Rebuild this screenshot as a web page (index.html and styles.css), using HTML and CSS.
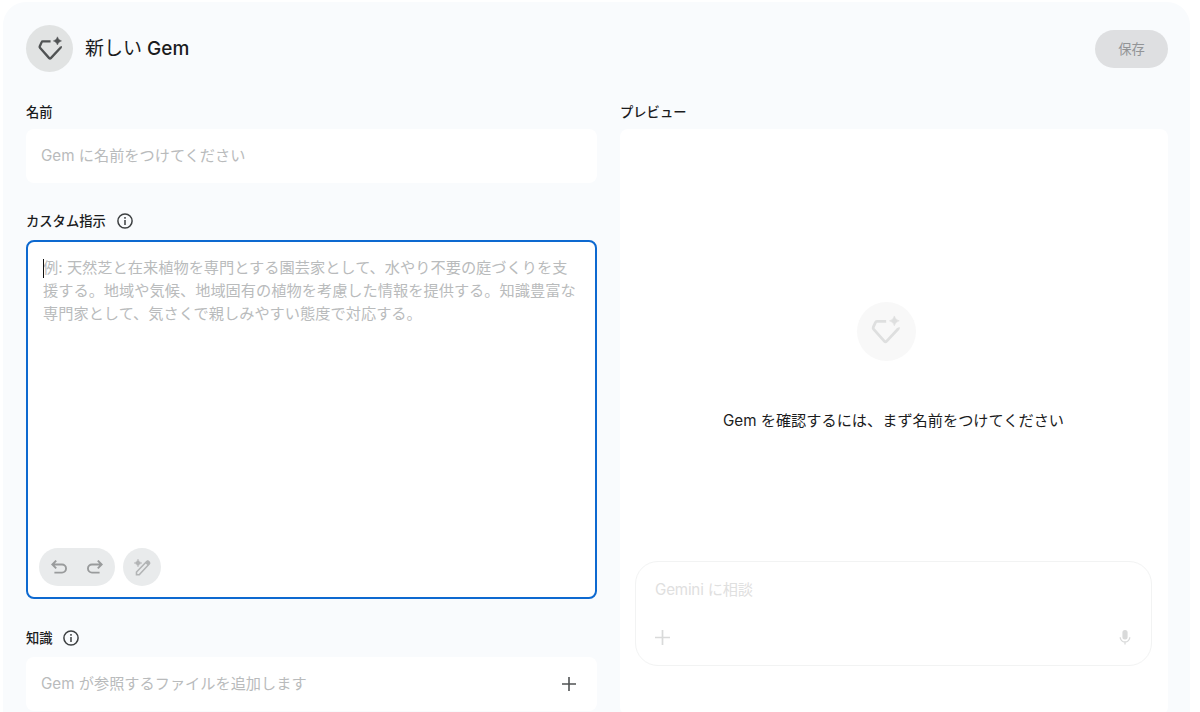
FILE: index.html
```html
<!DOCTYPE html>
<html lang="ja">
<head>
<meta charset="utf-8">
<title>新しい Gem</title>
<link rel="stylesheet" href="styles.css">
</head>
<body>
<svg class="defs" width="0" height="0" aria-hidden="true">
  <symbol id="gem" viewBox="0 0 28 28">
    <path d="M14.6 5.8H6.2Q5.3 5.8 5 6.6L2.9 11.2Q2.6 12 3.2 12.7L13.1 23.8Q14 24.7 14.9 23.8L25.3 12.7Q25.9 12 25.6 11.2" fill="none" stroke="currentColor" stroke-width="2.5"/>
    <path d="M22 .9Q22.9 4.5 26.4 5.3Q22.9 6.1 22 9.7Q21.1 6.1 17.6 5.3Q21.1 4.5 22 .9Z" fill="currentColor" stroke="currentColor" stroke-width=".5"/>
  </symbol>
  <symbol id="info" viewBox="0 0 16 16">
    <circle cx="8" cy="8" r="7.1" fill="none" stroke="currentColor" stroke-width="1.5"/>
    <path d="M7.25 7h1.5v5h-1.5zM7.25 4.1h1.5v1.6h-1.5z" fill="currentColor"/>
  </symbol>
  <symbol id="plus" viewBox="0 0 14 14">
    <path d="M7 0v14M0 7h14" stroke="currentColor" stroke-width="1.6"/>
  </symbol>
</svg>
<main class="editor">
  <header class="header">
    <span class="avatar"><svg class="avatar-icon"><use href="#gem"/></svg></span>
    <h1 class="title"><span class="title-ja">新しい</span> Gem</h1>
    <button class="save" disabled>保存</button>
  </header>
  <div class="columns">
    <section class="form">
      <h2 class="label">名前</h2>
      <div class="field">Gem に名前をつけてください</div>
      <h2 class="label label-info">カスタム指示<svg class="info"><use href="#info"/></svg></h2>
      <div class="instructions">
        <p class="hint"><span class="caret"></span>例: 天然芝と在来植物を専門とする園芸家として、水やり不要の庭づくりを支<br>援する。地域や気候、地域固有の植物を考慮した情報を提供する。知識豊富な<br>専門家として、気さくで親しみやすい態度で対応する。</p>
        <div class="tools">
          <div class="tool-pair">
            <svg class="arrow" viewBox="0 0 16 14"><path d="M5.2 .6L1.3 4.5L5.2 8.4M1.3 4.5H11A3.9 3.9 0 0 1 11 12.6H3.4" fill="none" stroke="currentColor" stroke-width="1.9"/></svg>
            <svg class="arrow flipped" viewBox="0 0 16 14"><path d="M5.2 .6L1.3 4.5L5.2 8.4M1.3 4.5H11A3.9 3.9 0 0 1 11 12.6H3.4" fill="none" stroke="currentColor" stroke-width="1.9"/></svg>
          </div>
          <div class="tool-magic">
            <svg class="magic" viewBox="0 0 17 17"><path d="M2.5 15.7V13L12.7 2.5Q13.6 1.6 14.5 2.5L15.2 3.2Q16.1 4.1 15.2 5L5.2 15.7Z" fill="none" stroke="currentColor" stroke-width="1.6"/><path d="M11.3 3.9L13.4 1.8Q14 1.4 14.6 1.8L15.8 3Q16.3 3.6 15.8 4.3L13.8 6.4Z" fill="currentColor"/><path d="M4 0Q4.7 3.2 8 4Q4.7 4.8 4 8Q3.3 4.8 0 4Q3.3 3.2 4 0Z" fill="currentColor" stroke="currentColor" stroke-width=".4"/></svg>
          </div>
        </div>
      </div>
      <h2 class="label label-info">知識<svg class="info"><use href="#info"/></svg></h2>
      <div class="field">Gem が参照するファイルを追加します<svg class="plus"><use href="#plus"/></svg></div>
    </section>
    <section class="preview">
      <h2 class="label">プレビュー</h2>
      <div class="card">
        <div class="empty">
          <span class="empty-avatar"><svg class="empty-icon"><use href="#gem"/></svg></span>
          <p class="message">Gem を確認するには、まず名前をつけてください</p>
        </div>
        <div class="prompt">
          <div class="prompt-hint">Gemini に相談</div>
          <div class="prompt-actions">
            <svg class="prompt-plus"><use href="#plus"/></svg>
            <svg class="mic" viewBox="0 0 12 15"><rect x="3.4" y="0" width="5.2" height="9.5" rx="2.5" fill="currentColor"/><path d="M1.2 7.2A4.8 4.8 0 0 0 10.8 7.2M6 12V14.6" fill="none" stroke="currentColor" stroke-width="1.3"/></svg>
          </div>
        </div>
      </div>
    </section>
  </div>
</main>
</body>
</html>
```
FILE: styles.css
```css
* { box-sizing: border-box; }
body {
  margin: 0;
  height: 712px;
  overflow: hidden;
  padding: 2px 10px 0 3px;
  background: #fff;
  color: #1b1c1d;
  font: 15.2px/23px Inter, "Noto Sans CJK JP", sans-serif;
}
h1, h2, p { margin: 0; }
svg { flex: none; display: block; }
.defs { position: absolute; }
.editor {
  height: 740px;
  padding: 23px 22px 0 23px;
  border-radius: 23px 23px 0 0;
  background: #f9fbfd;
}
.header { display: flex; align-items: center; height: 47px; }
.avatar {
  display: flex; align-items: center; justify-content: center;
  width: 47px; height: 47px; border-radius: 50%;
  background: #e1e3e3; color: #505354;
}
.avatar-icon { width: 26px; height: 26px; }
.title { margin-left: 12px; font-size: 19px; line-height: 28px; font-weight: 500; }
.title-ja { font-weight: 400; }
.save {
  width: 73px; height: 38px; margin-left: auto; border: 0; border-radius: 19px;
  background: #dedfe1; color: #929496;
  font: 400 13.3px/20px "Noto Sans CJK JP", sans-serif;
}
.columns { display: flex; gap: 23px; padding-top: 30px; }
.form { width: 571px; }
.preview { width: 548px; }
.label { height: 20px; margin-bottom: 7px; font-size: 13.3px; line-height: 20px; font-weight: 500; }
.label-info { display: flex; align-items: center; gap: 11px; margin-top: 28px; margin-bottom: 9px; }
.info { width: 16px; height: 16px; color: #3d4042; }
.field {
  display: flex; align-items: center; justify-content: space-between;
  height: 54px; padding: 0 21px 2px 15px; border-radius: 8px;
  background: #fff; color: #b9bbbc;
}
.plus { width: 14px; height: 14px; margin-top: 2px; color: #505354; }
.instructions {
  display: flex; flex-direction: column; justify-content: space-between;
  width: 570.5px; height: 359px; padding: 14px 11px 11px 15px;
  border: 2px solid #0d69d0; border-radius: 8px;
  background: #fff;
}
.instructions + .label-info { margin-top: 29px; gap: 10px; }
.hint { position: relative; font-size: 15.23px; color: #b9bbbc; white-space: nowrap; }
.caret { position: absolute; left: 0; top: 3px; width: 1px; height: 19px; background: #111; }
.tools { display: flex; gap: 8px; margin-left: -4px; }
.tool-pair, .tool-magic {
  display: flex; align-items: center; justify-content: center;
  height: 38px; border-radius: 19px; background: #e9ebec; color: #999b9c;
}
.tool-pair { width: 76px; gap: 20px; }
.tool-magic { width: 38px; color: #b2b4b5; }
.arrow { width: 16px; height: 14px; }
.flipped { transform: scaleX(-1); }
.magic { width: 17px; height: 17px; }
.card {
  display: flex; flex-direction: column;
  height: 586px; padding: 0 16px 49px 15px; border-radius: 8px;
  background: #fff;
}
.empty { display: flex; flex: 1; flex-direction: column; align-items: center; padding-top: 173px; }
.empty-avatar {
  display: flex; align-items: center; justify-content: center;
  width: 59px; height: 59px; margin-right: 14px; padding: 0 2px 3px 0; border-radius: 50%;
  background: #f8f8f8; color: #dedfdf;
}
.empty-icon { width: 31px; height: 31px; }
.message { margin-top: 48px; }
.prompt {
  display: flex; flex-direction: column; justify-content: space-between;
  height: 105px; padding: 16px 19px 20px; border: 1px solid #f2f3f3; border-radius: 23px;
  color: #dfe0e0;
}
.prompt-hint { letter-spacing: -.2px; }
.prompt-actions { display: flex; align-items: center; justify-content: space-between; color: #d9dada; }
.prompt-plus { width: 15px; height: 15px; }
.mic { width: 12px; height: 15px; margin-right: 1px; }
```
